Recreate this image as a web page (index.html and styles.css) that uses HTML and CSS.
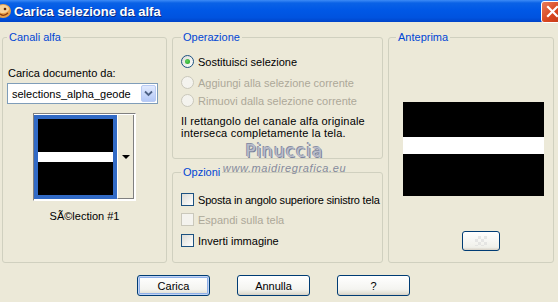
FILE: index.html
```html
<!DOCTYPE html>
<html lang="it">
<head>
    <meta charset="UTF-8">
    <title>Carica selezione da alfa</title>
    <link rel="stylesheet" href="styles.css">
</head>
<body>
    <div class="window">
        <div class="titlebar">
            <svg class="app-icon" width="12" height="18" viewBox="0 0 12 18">
                <ellipse cx="3" cy="9" rx="8" ry="7" fill="#e8a24a"/>
                <ellipse cx="3" cy="7" rx="6" ry="4" fill="#f6d29a"/>
                <circle cx="5" cy="7" r="1.3" fill="#5a2a0a"/>
                <path d="M0 12 Q4 15 8 11" stroke="#8a3a10" stroke-width="1.2" fill="none"/>
            </svg>
            <span class="title">Carica selezione da alfa</span>
            <div class="close-btn">
                <svg width="13" height="13" viewBox="0 0 13 13">
                    <path d="M2 2 L11 11 M11 2 L2 11" stroke="#fff" stroke-width="2.2" stroke-linecap="square"/>
                </svg>
            </div>
        </div>

        <div class="content">
            <div class="panels">
                <fieldset class="group group-channels">
                    <legend>Canali alfa</legend>
                    <div class="field-label">Carica documento da:</div>
                    <div class="select">
                        <span class="select-value">selections_alpha_geode</span>
                        <span class="select-btn">
                            <svg width="9" height="7" viewBox="0 0 9 7">
                                <path d="M1 1.5 L4.5 5 L8 1.5" stroke="#4d6185" stroke-width="1.8" fill="none"/>
                            </svg>
                        </span>
                    </div>
                    <div class="thumb-picker">
                        <div class="thumb">
                            <div class="thumb-stripe"></div>
                        </div>
                        <div class="thumb-arrow"><span class="tri"></span></div>
                    </div>
                    <div class="thumb-name">SÃ©lection #1</div>
                </fieldset>

                <div class="middle">
                    <fieldset class="group group-op">
                        <legend>Operazione</legend>
                        <div class="opt-row first">
                            <span class="radio checked"></span>
                            <span>Sostituisci selezione</span>
                        </div>
                        <div class="opt-row disabled row-add">
                            <span class="radio"></span>
                            <span>Aggiungi alla selezione corrente</span>
                        </div>
                        <div class="opt-row disabled row-sub">
                            <span class="radio"></span>
                            <span>Rimuovi dalla selezione corrente</span>
                        </div>
                        <p class="op-note">Il rettangolo del canale alfa originale<br>interseca completamente la tela.</p>
                    </fieldset>

                    <fieldset class="group group-opts">
                        <legend>Opzioni</legend>
                        <div class="opt-row first">
                            <span class="check"></span>
                            <span class="tight">Sposta in angolo superiore sinistro tela</span>
                        </div>
                        <div class="opt-row disabled">
                            <span class="check"></span>
                            <span>Espandi sulla tela</span>
                        </div>
                        <div class="opt-row row-last">
                            <span class="check"></span>
                            <span>Inverti immagine</span>
                        </div>
                    </fieldset>
                </div>

                <fieldset class="group group-preview">
                    <legend>Anteprima</legend>
                    <div class="preview">
                        <div class="preview-stripe"></div>
                    </div>
                    <div class="mini-btn"><span class="checker"></span></div>
                </fieldset>
            </div>

            <div class="buttons">
                <button class="btn default">Carica</button>
                <button class="btn">Annulla</button>
                <button class="btn">?</button>
            </div>
        </div>

        <div class="watermark">
            <div class="wm-name">Pinuccia</div>
            <div class="wm-site">www.maidiregrafica.eu</div>
        </div>
    </div>
</body>
</html>
```

FILE: styles.css
```css
body {
    margin: 0;
    background-color: #ece9d8;
    font-family: "Liberation Sans", Arial, sans-serif;
    font-size: 11px;
    color: #000;
}
.window {
    position: relative;
    width: 558px;
    height: 302px;
    overflow: hidden;
    background-color: #ece9d8;
}
.titlebar {
    height: 22px;
    display: flex;
    align-items: center;
    background: linear-gradient(#3d8bf6 0, #0a62e6 3px, #0058e6 45%, #0053df 80%, #0044c9 100%);
    color: #fff;
}
.app-icon {
    margin-left: 0;
    margin-right: 2px;
}
.title {
    font-weight: bold;
    font-size: 13px;
    text-shadow: 1px 1px #0a2a80;
    flex: 1;
}
.close-btn {
    width: 21px;
    height: 20px;
    margin-top: 1px;
    margin-right: -6px;
    border: 1px solid #fff;
    border-radius: 3px;
    background: linear-gradient(135deg, #e87c5c, #d8461f 55%, #c23a16);
    display: flex;
    align-items: center;
    justify-content: center;
}
.content {
    padding: 9px 0 0 2px;
}
.panels {
    display: flex;
    gap: 5px;
}
.group {
    margin: 0;
    padding: 0;
    min-width: 0;
    border: 1px solid #d0d0bf;
    border-radius: 3px;
    box-sizing: border-box;
}
.group legend {
    padding: 0 2px;
    color: #0046d5;
    line-height: 13px;
}
.group-channels {
    width: 165px;
    height: 232px;
}
.group-channels legend {
    margin-left: 4px;
}
.field-label {
    margin: 23px 0 0 5px;
    line-height: 13px;
}
.select {
    margin: 3px 0 0 4px;
    width: 151px;
    height: 21px;
    box-sizing: border-box;
    border: 1px solid #7f9db9;
    background: #fff;
    display: flex;
    align-items: center;
}
.select-value {
    flex: 1;
    padding-left: 4px;
}
.select-btn {
    width: 15px;
    height: 17px;
    margin-right: 1px;
    border-radius: 2px;
    background: linear-gradient(#e1eafe, #b4c8f6);
    border: 1px solid #b9cbf3;
    box-sizing: border-box;
    display: flex;
    align-items: center;
    justify-content: center;
}
.thumb-picker {
    margin: 9px 0 0 30px;
    width: 103px;
    height: 88px;
    box-sizing: border-box;
    border: 1px solid;
    border-color: #808080 #fff #fff #808080;
    background: #fff;
    display: flex;
}
.thumb {
    width: 83px;
    height: 84px;
    margin: 1px 0 0 0;
    box-sizing: border-box;
    border: 4px solid #316ac5;
    background: #000;
    padding-top: 33px;
}
.thumb-stripe {
    height: 10px;
    background: #fff;
}
.thumb-arrow {
    width: 17px;
    margin: 1px 0;
    box-sizing: border-box;
    background: #ece9d8;
    border-left: 1px solid #fff;
    border-right: 1px solid #808080;
    border-bottom: 1px solid #808080;
    display: flex;
    align-items: center;
    justify-content: center;
}
.tri {
    width: 0;
    height: 0;
    border-left: 4px solid transparent;
    border-right: 4px solid transparent;
    border-top: 4px solid #000;
}
.thumb-name {
    margin-top: 9px;
    text-align: center;
    line-height: 13px;
}
.middle {
    display: flex;
    flex-direction: column;
    gap: 7px;
}
.group-op {
    width: 211px;
    height: 128px;
}
.group-op legend,
.group-opts legend {
    margin-left: 8px;
}
.group-opts {
    width: 211px;
    height: 97px;
}
.opt-row {
    display: flex;
    align-items: center;
    gap: 4px;
    margin-left: 8px;
    height: 13px;
    white-space: nowrap;
}
.opt-row.disabled {
    color: #aca899;
}
.tight {
    letter-spacing: -0.2px;
}
.group-op .opt-row.first {
    margin-top: 11px;
}
.row-add {
    margin-top: 8px;
}
.row-sub {
    margin-top: 5px;
}
.group-opts .opt-row.first {
    margin-top: 14px;
}
.group-opts .opt-row {
    margin-top: 7px;
}
.group-opts .row-last {
    margin-top: 8px;
}
.radio {
    width: 13px;
    height: 13px;
    box-sizing: border-box;
    border-radius: 50%;
    border: 1px solid #1c5180;
    background: linear-gradient(135deg, #dcdcd6, #fff);
    position: relative;
    flex-shrink: 0;
}
.radio.checked::after {
    content: "";
    position: absolute;
    left: 3px;
    top: 3px;
    width: 5px;
    height: 5px;
    border-radius: 50%;
    background: radial-gradient(circle at 40% 40%, #5ed25e, #21a121);
}
.disabled .radio {
    border-color: #cac8bb;
    background: #f4f3ee;
}
.op-note {
    margin: 8px 0 0 8px;
    line-height: 12px;
    letter-spacing: 0.2px;
}
.check {
    width: 13px;
    height: 13px;
    box-sizing: border-box;
    border: 1px solid #1c5180;
    background: linear-gradient(135deg, #dcdcd6, #fff);
    flex-shrink: 0;
}
.disabled .check {
    border-color: #cac8bb;
    background: #f4f3ee;
}
.group-preview {
    width: 166px;
    height: 232px;
}
.group-preview legend {
    margin-left: 7px;
}
.preview {
    margin: 58px 0 0 14px;
    width: 141px;
    height: 94px;
    background: #000;
    padding-top: 35px;
    box-sizing: border-box;
}
.preview-stripe {
    height: 17px;
    background: #fff;
}
.mini-btn {
    margin: 35px 0 0 73px;
    width: 38px;
    height: 20px;
    box-sizing: border-box;
    border: 1px solid #003c74;
    border-radius: 3px;
    background: linear-gradient(#fff, #f0f0ea 85%, #d6d0c5);
    display: flex;
    align-items: center;
    justify-content: center;
}
.checker {
    width: 12px;
    height: 10px;
    background:
        linear-gradient(45deg, #dcdcdc 25%, transparent 25%, transparent 75%, #dcdcdc 75%),
        linear-gradient(45deg, #dcdcdc 25%, transparent 25%, transparent 75%, #dcdcdc 75%);
    background-size: 6px 6px;
    background-position: 0 0, 3px 3px;
    opacity: 0.6;
}
.buttons {
    display: flex;
    gap: 27px;
    margin: 12px 0 0 135px;
}
.btn {
    width: 73px;
    height: 21px;
    padding: 0;
    font-family: "Liberation Sans", Arial, sans-serif;
    font-size: 11px;
    color: #000;
    border: 1px solid #003c74;
    border-radius: 3px;
    background: linear-gradient(#fff, #f4f4f0 70%, #e3e1d6 90%, #d6d0c5);
}
.btn.default {
    box-shadow: inset 0 0 0 1px #c2d4f4, inset 0 0 0 2px #8fb0e8;
}
.watermark {
    position: absolute;
    left: 222px;
    top: 141px;
    width: 125px;
    text-align: center;
    pointer-events: none;
}
.wm-name {
    font-family: "DejaVu Sans", sans-serif;
    font-size: 17px;
    color: #b8bccb;
    text-shadow: -1px -1px 0 #8a90a5, 1px 1px 0 #7b839c;
    letter-spacing: 1px;
    line-height: 21px;
}
.wm-site {
    font-size: 11px;
    font-style: italic;
    color: #858a9c;
    letter-spacing: 0.6px;
    line-height: 12px;
}
```
